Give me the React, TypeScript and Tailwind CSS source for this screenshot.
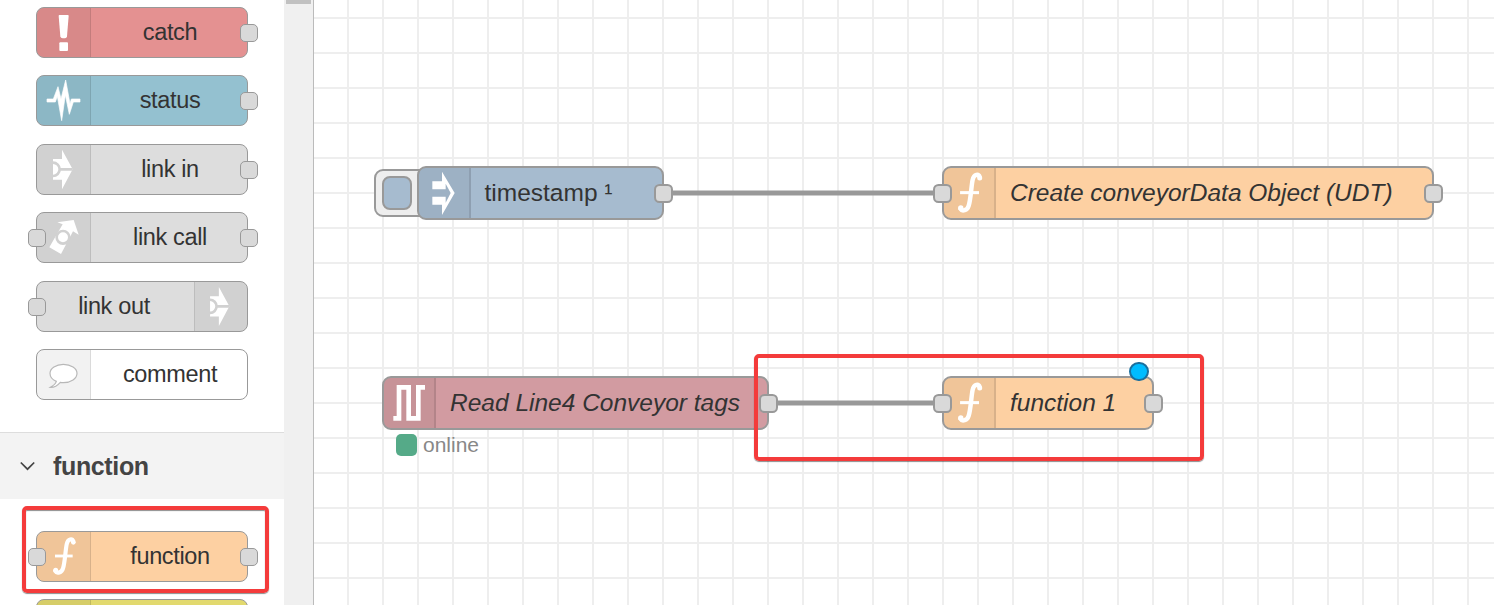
import type { ReactNode } from "react";

type PortSide = "left" | "right";

function FunctionGlyph({ viewBox }: { viewBox: string }) {
  return (
    <svg viewBox={viewBox} className="block h-full w-full" fill="none" stroke="#fff">
      <path d="M60 13 C57 5 44 3 40 22 C36 42 35 76 29 94 C25 107 11 111 6 102" strokeWidth="12.5" strokeLinecap="round" />
      <circle cx="60" cy="16" r="7" fill="#fff" stroke="none" />
      <circle cx="7" cy="100" r="7.5" fill="#fff" stroke="none" />
      <path d="M5 57H58" strokeWidth="8.5" />
    </svg>
  );
}

function CatchIcon() {
  return (
    <svg viewBox="111 24 159 147" className="block h-full w-full" fill="#fff">
      <path d="M178 45H204Q206 45 206 48L201 109Q200 115 195 115H188Q182 115 181 109L176 48Q176 45 178 45Z" />
      <rect x="178" y="127" width="26" height="26" rx="3" />
    </svg>
  );
}

function StatusIcon() {
  return (
    <svg viewBox="111 228 159 147" className="block h-full w-full" fill="#fff">
      <path
        d="M141 297H160L174 260L183 297L197 240L210 311L214 297H240V306H220L208 343L196 285L185 362L172 289L166 306H141Z"
        stroke="#fff"
        strokeWidth="2"
      />
    </svg>
  );
}

function LinkIcon({ viewBox }: { viewBox: string }) {
  return (
    <svg viewBox={viewBox} className="block h-full w-full">
      <path d="M159 72H186V44L218 103L186 163V134H159Z" fill="#fff" />
      <path d="M157 83H159A20 20 0 0 1 159 123H157M179 103H218" fill="none" stroke="#d1d1d1" strokeWidth="8" />
    </svg>
  );
}

function LinkCallIcon() {
  return (
    <svg viewBox="111 234 159 147" className="block h-full w-full">
      <path d="M148 337L188 268L172 262L221 255L236 299L219 289L183 357Z" fill="#fff" />
      <circle cx="189" cy="307" r="19" fill="#fff" stroke="#d1d1d1" strokeWidth="8" />
    </svg>
  );
}

function CommentIcon() {
  return (
    <svg viewBox="111 240 159 147" className="block h-full w-full">
      <path
        d="M169 334C156 329 150 320 150 310C150 295 168 283 190 283C213 283 231 295 231 310C231 326 213 338 190 338C187 338 184 338 181 337C173 346 163 353 151 352C160 347 167 341 169 334Z"
        fill="#fff"
        stroke="#b8b8b8"
        strokeWidth="3.5"
      />
    </svg>
  );
}

function InjectIcon() {
  return (
    <svg viewBox="163 39 150 150" className="block h-full w-full" fill="#fff">
      <path d="M203 79H232V50L270 114L232 180V149H203V125H243V143L258 114L243 86V103H203Z" />
    </svg>
  );
}

function PulseIcon() {
  return (
    <svg viewBox="42 99 150 150" className="block h-full w-full" fill="none" stroke="#fff" strokeWidth="14">
      <path d="M70 220H87V127H116V220H145V127H165" />
    </svg>
  );
}

function PalettePort({ side }: { side: PortSide }) {
  const place = side === "left" ? "-left-[9px]" : "-right-[11px]";
  return <span className={`absolute top-[16px] h-[18px] w-[18px] rounded-[5px] border border-[#999] bg-[#d9d9d9] ${place}`} />;
}

interface PaletteNodeProps {
  label: string;
  color: string;
  icon: ReactNode;
  ports?: PortSide[];
  iconRight?: boolean;
}

function PaletteNode({ label, color, icon, ports = [], iconRight }: PaletteNodeProps) {
  return (
    <div
      className={`relative ml-[36px] flex h-[51px] w-[212px] shrink-0 rounded-[8px] border border-[#999] ${color} ${iconRight ? "flex-row-reverse" : ""}`}
    >
      <div
        className={`h-full shrink-0 bg-black/5 ${iconRight ? "w-[53px] rounded-r-[7px] border-l border-black/10" : "w-[54px] rounded-l-[7px] border-r border-black/10"}`}
      >
        {icon}
      </div>
      <div
        className={`flex flex-1 items-center justify-center whitespace-nowrap text-[23.5px] leading-none tracking-[-0.35px] text-[#333] ${iconRight ? "pr-[3px]" : "pl-[2px]"}`}
      >
        {label}
      </div>
      {ports.map((side) => (
        <PalettePort key={side} side={side} />
      ))}
    </div>
  );
}

function CanvasPort({ side }: { side: PortSide }) {
  const place = side === "left" ? "-left-[11px]" : "-right-[11px]";
  return <span className={`absolute top-[15.5px] h-[19px] w-[19px] rounded-[5.5px] border-2 border-[#999] bg-[#d9d9d9] ${place}`} />;
}

interface CanvasNodeProps {
  label: string;
  frame: string;
  icon: ReactNode;
  ports: PortSide[];
  italic?: boolean;
}

function CanvasNode({ label, frame, icon, ports, italic }: CanvasNodeProps) {
  return (
    <div className={`absolute flex h-[54px] rounded-[9px] border-2 border-[#999] ${frame}`}>
      <div className="h-full w-[52px] shrink-0 rounded-l-[7px] border-r-2 border-black/10 bg-black/5">{icon}</div>
      <div
        className={`flex items-center whitespace-nowrap text-[24.5px] leading-none text-[#333] ${italic ? "pl-[14px] italic" : "pl-[13.5px]"}`}
      >
        {label}
      </div>
      {ports.map((side) => (
        <CanvasPort key={side} side={side} />
      ))}
    </div>
  );
}

function Sidebar() {
  return (
    <aside className="relative flex w-[284px] shrink-0 flex-col overflow-hidden bg-white">
      <div className="flex h-[432px] shrink-0 flex-col gap-[17.5px] pt-[6.9px]">
        <PaletteNode label="catch" color="bg-[#e49191]" icon={<CatchIcon />} ports={["right"]} />
        <PaletteNode label="status" color="bg-[#94c1d0]" icon={<StatusIcon />} ports={["right"]} />
        <PaletteNode label="link in" color="bg-[#ddd]" icon={<LinkIcon viewBox="111 30 159 147" />} ports={["right"]} />
        <PaletteNode label="link call" color="bg-[#ddd]" icon={<LinkCallIcon />} ports={["left", "right"]} />
        <PaletteNode label="link out" color="bg-[#ddd]" icon={<LinkIcon viewBox="113 30 159 147" />} ports={["left"]} iconRight />
        <PaletteNode label="comment" color="bg-white" icon={<CommentIcon />} />
      </div>
      <div className="flex h-[67px] shrink-0 items-center border-t border-[#ddd] bg-[#f3f3f3] pl-[20px]">
        <svg viewBox="0 0 15 10" className="h-[10px] w-[15px]" fill="none" stroke="#444" strokeWidth="1.7">
          <path d="M0.8 1.5L7.5 8.2L14.2 1.5" />
        </svg>
        <span className="pl-[18px] text-[25px] font-bold leading-none tracking-[-0.35px] text-[#444]">function</span>
      </div>
      <div className="flex shrink-0 flex-col gap-[17.5px] pt-[31.9px]">
        <PaletteNode label="function" color="bg-[#fdd0a2]" icon={<FunctionGlyph viewBox="-49 -15 159 147" />} ports={["left", "right"]} />
        <PaletteNode label="" color="bg-[#e2d96e]" icon={null} />
      </div>
      <div className="absolute left-[22px] top-[506px] h-[87px] w-[247px] rounded-[5px] border-4 border-[#f43b3b] shadow-[0_1px_1px_rgba(0,0,0,0.45),inset_0_1px_1px_rgba(0,0,0,0.45)]" />
    </aside>
  );
}

function Workspace() {
  return (
    <main className="relative flex-1 overflow-hidden border-l border-[#bbb] bg-white bg-[linear-gradient(to_right,#eee_2px,transparent_2px),linear-gradient(to_bottom,#eee_2px,transparent_2px)] bg-[size:35px_35px] bg-[position:33px_17px]">
      <svg className="absolute left-0 top-0 h-[605px] w-[1180px]" stroke="#999" strokeWidth="5">
        <path d="M349 193H629M454 403H629" />
      </svg>

      <div className="absolute left-[60px] top-[169px] h-[48px] w-[60px] rounded-[9px] border-2 border-[#999] bg-[#eee]">
        <div className="ml-[6px] mt-[5px] h-[34px] w-[30px] rounded-[8px] border-2 border-[#999] bg-[#a6bbcf]" />
      </div>
      <CanvasNode label="timestamp ¹" frame="left-[103px] top-[166px] w-[247px] bg-[#a6bbcf]" icon={<InjectIcon />} ports={["right"]} />
      <CanvasNode
        label="Create conveyorData Object (UDT)"
        frame="left-[628px] top-[166px] w-[492px] bg-[#fdd0a2]"
        icon={<FunctionGlyph viewBox="-40 -12 140 140" />}
        ports={["left", "right"]}
        italic
      />
      <CanvasNode label="Read Line4 Conveyor tags" frame="left-[68px] top-[376px] w-[387px] bg-[#d29ba1]" icon={<PulseIcon />} ports={[]} italic />
      <CanvasNode
        label="function 1"
        frame="left-[628px] top-[376px] w-[212px] bg-[#fdd0a2]"
        icon={<FunctionGlyph viewBox="-40 -12 140 140" />}
        ports={["left", "right"]}
        italic
      />

      <div className="absolute left-[82px] top-[433px] flex items-center gap-[6px]">
        <span className="h-[22px] w-[21px] rounded-[5px] bg-[#5a8]" />
        <span className="pt-[1px] text-[21px] leading-[22px] text-[#888]">online</span>
      </div>
      <span className="absolute left-[815px] top-[362px] h-[19px] w-[20px] rounded-full border-2 border-[#1b6f9d] bg-[#00bcff]" />
      <div className="absolute left-[440px] top-[354px] h-[107px] w-[450px] rounded-[5px] border-4 border-[#f43b3b] shadow-[0_1px_1px_rgba(0,0,0,0.45)]" />
      <span className="absolute left-[445px] top-[393.5px] h-[19px] w-[19px] rounded-[5.5px] border-2 border-[#999] bg-[#d9d9d9]" />
    </main>
  );
}

export default function App() {
  return (
    <div className="flex h-[605px] w-[1494px] overflow-hidden bg-white font-['Liberation_Sans',Arial,sans-serif]">
      <Sidebar />
      <div className="flex w-[29px] shrink-0 justify-center bg-[#f0f0f0]">
        <div className="mr-[1px] h-[4px] w-[25px] bg-[#c1c1c1]" />
      </div>
      <Workspace />
    </div>
  );
}
